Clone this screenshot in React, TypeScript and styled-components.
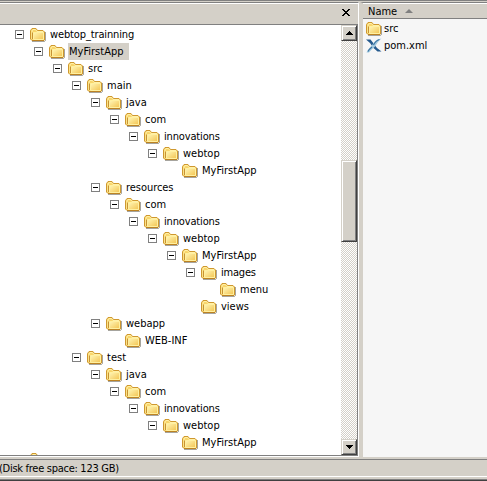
import React from "react";
import styled, { createGlobalStyle } from "styled-components";

const Global = createGlobalStyle`
  * { box-sizing: border-box; }
  body { margin: 0; background: #d4d0c8; font: 11px/17px "DejaVu Sans Condensed", "DejaVu Sans", sans-serif; font-stretch: condensed; color: #000; overflow: hidden; }
`;
const Window = styled.div`
  width: 487px; height: 481px; display: flex; flex-direction: column; overflow: hidden;
  border-top: 1px solid #808080; background: #d4d0c8;
`;
const Panes = styled.div`height: 456px; display: flex;`;
const FolderPane = styled.section`
  width: 359px; margin-top: 1px; height: 455px; display: flex; flex-direction: column;
  border-top: 1px solid #808080; border-right: 1px solid #fff; border-bottom: 1px solid #fff;
`;
const PaneHeader = styled.header`
  height: 21px; flex: none; border-top: 1px solid #fff; display: flex; justify-content: flex-end; padding: 5px 8px 0 0;
`;
const TreeView = styled.div`
  flex: 1; min-height: 0; display: flex; background: #fff; overflow: hidden;
  border: solid #808080; border-width: 1px 1px 1px 0;
`;
const Tree = styled.div`flex: 1; padding-top: 1px; overflow: hidden;`;
const Row = styled.div<{ $level: number }>`
  height: 17px; display: flex; align-items: center; padding-left: ${p => 15 + p.$level * 19}px;
`;
const Expander = styled.span<{ $hidden: boolean }>`
  width: 9px; height: 9px; border: 1px solid #808080; margin-right: 6px; flex: none; display: grid; place-items: center;
  visibility: ${p => (p.$hidden ? "hidden" : "visible")};
  &::after { content: ""; width: 5px; height: 1px; background: #000; }
`;
const Label = styled.span<{ $selected?: boolean; $tracking: number }>`
  height: 17px; line-height: 18px; margin-left: 3px; padding-left: 1px; white-space: nowrap;
  background: ${p => (p.$selected ? "#d4d0c8" : "transparent")};
  width: ${p => (p.$selected ? "61px" : "auto")};
  letter-spacing: ${p => p.$tracking}px;
`;
const Scrollbar = styled.div`
  width: 16px; display: flex; flex-direction: column;
  background: repeating-conic-gradient(#d4d0c8 0 25%, #fff 0 50%) 0 0 / 2px 2px;
`;
const Raised = styled.div<{ $h: number; $gap?: number }>`
  height: ${p => p.$h}px; margin-top: ${p => p.$gap ?? 0}px; flex: none; display: grid; place-items: center; background: #d4d0c8;
  border: 1px solid; border-color: #d4d0c8 #404040 #404040 #d4d0c8;
  box-shadow: inset 1px 1px #fff, inset -1px -1px #808080;
`;
const FilePane = styled.section`
  flex: 1; margin: 1px 0 0 1px; border-top: 1px solid #808080; border-left: 3px solid #d4d0c8; background: #f6f6f6;
`;
const ColumnHeader = styled.header`
  height: 16px; background: #d4d0c8; border-top: 1px solid #fff; border-bottom: 1px solid #808080;
  display: flex; align-items: center; padding-left: 5px; gap: 8px; line-height: 15px;
`;
const Files = styled.div`padding-top: 1px;`;
const FileRow = styled.div`
  height: 17px; display: flex; align-items: center; padding-left: 3px; gap: 2px; line-height: 17px;
`;
const StatusBar = styled.footer`
  margin-top: 2px; height: 18px; border-top: 1px solid #808080; border-bottom: 1px solid #fff; line-height: 17px;
  text-indent: -1px; letter-spacing: -.28px; white-space: nowrap;
`;
const BottomEdge = styled.div`margin-top: 2px; height: 2px; background: #404040; border-top: 1px solid #808080;`;
const Icon = styled.svg`flex: none; display: block;`;

function Folder() {
  return (
    <Icon width="16" height="17" viewBox="0 0 16 17">
      <defs>
        <linearGradient id="face" x1="0" y1="0" x2="1" y2="1">
          <stop offset="0" stopColor="#fff5b5" /><stop offset="1" stopColor="#f3c552" />
        </linearGradient>
      </defs>
      <path d="M2 15.500h12.500l1-1V6" fill="none" stroke="#77736a" strokeOpacity=".65" />
      <path d="M.5 13V4.500L2 2.500h4L7.500 4.500H13l1.500 1.500v8l-.5.500H2z" fill="#f8d56b" stroke="#cf982f" />
      <path d="M2 13V5l1-1.500h2.500L7 5.500h6" fill="none" stroke="#fff0a8" />
      <path d="M3.500 6.500h10v7h-10z" fill="url(#face)" stroke="#fff0a0" />
      <path d="M2.500 13V6.500M2 14.500h12" fill="none" stroke="#b97e20" strokeWidth=".8" />
    </Icon>
  );
}
const Arrow = ({ down = false }) => (
  <Icon width="7" height="4" shapeRendering="crispEdges">
    <path d={down ? "M0 0h7v1H0zM1 1h5v1H1zM2 2h3v1H2zM3 3h1v1H3z" : "M3 0h1v1H3zM2 1h3v1H2zM1 2h5v1H1zM0 3h7v1H0z"} />
  </Icon>
);
const Close = () => (
  <Icon width="8" height="7" shapeRendering="crispEdges">
    <path d="M0 0h2v1H0zM6 0h2v1H6zM1 1h2v1H1zM5 1h2v1H5zM2 2h4v1H2zM3 3h2v1H3zM2 4h4v1H2zM1 5h2v1H1zM5 5h2v1H5zM0 6h2v1H0zM6 6h2v1H6z" />
  </Icon>
);
const XmlIcon = () => (
  <Icon width="16" height="17" viewBox="0 0 16 17">
    <path d="M0 2.500h4.500L8 7l3 4 4.500 3.500h-4L7.500 11 4 6z" fill="#24598d" />
    <path d="M15.500 1.500C12 4 11 7 9 9.500c-2 2.500-4 3-6 6H.5C2 12 4.500 10 6.500 7.500 8.500 4 11 2 15.500 1.500z" fill="#a3c9df" />
    <path d="M13.500 2.500C10 3.500 8.500 6 7.500 8M6 10c-2 1.500-3 2.500-4 4.500" stroke="#3b75a3" strokeWidth="1.200" fill="none" />
  </Icon>
);

const nodes: [number, string, boolean][] = [
  [0, "webtop_trainning", true], [1, "MyFirstApp", true], [2, "src", true], [3, "main", true],
  [4, "java", true], [5, "com", true], [6, "innovations", true], [7, "webtop", true], [8, "MyFirstApp", false],
  [4, "resources", true], [5, "com", true], [6, "innovations", true], [7, "webtop", true], [8, "MyFirstApp", true],
  [9, "images", true], [10, "menu", false], [9, "views", false], [4, "webapp", true], [5, "WEB-INF", false],
  [3, "test", true], [4, "java", true], [5, "com", true], [6, "innovations", true], [7, "webtop", true], [8, "MyFirstApp", false],
];
const tracking: Record<string, number> = {
  webtop_trainning: -0.13, innovations: -0.15, MyFirstApp: 0, resources: -0.05, images: -0.2,
};

export default function App() {
  return (
    <Window>
      <Global />
      <Panes>
        <FolderPane>
          <PaneHeader><Close /></PaneHeader>
          <TreeView>
            <Tree>
              {nodes.map(([level, name, expandable], i) => (
                <Row key={i} $level={level}>
                  <Expander $hidden={!expandable} /><Folder />
                  <Label $selected={i === 1} $tracking={tracking[name] ?? 0}>{name}</Label>
                </Row>
              ))}
              <Row $level={0}><Expander $hidden /><Folder /></Row>
            </Tree>
            <Scrollbar>
              <Raised $h={16}><Arrow /></Raised>
              <Raised $h={82} $gap={119} />
              <Raised $h={16} $gap={197}><Arrow down /></Raised>
            </Scrollbar>
          </TreeView>
        </FolderPane>
        <FilePane>
          <ColumnHeader>Name <Icon width="8" height="4"><path d="M0 4 4 0 8 4z" fill="#808080" /></Icon></ColumnHeader>
          <Files>
            <FileRow><Folder />src</FileRow>
            <FileRow><XmlIcon />pom.xml</FileRow>
          </Files>
        </FilePane>
      </Panes>
      <StatusBar>(Disk free space: 123 GB)</StatusBar>
      <BottomEdge />
    </Window>
  );
}
